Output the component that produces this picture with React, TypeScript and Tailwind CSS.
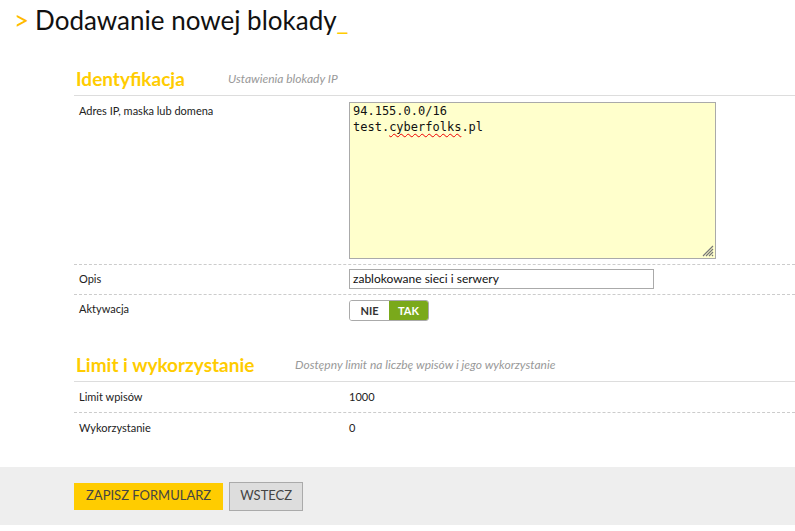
import React from "react";

const font = { fontFamily: "Lato, 'Open Sans', sans-serif" };

const Row = ({
  label,
  children,
  dashed = true,
  className = "",
}: {
  label: string;
  children: React.ReactNode;
  dashed?: boolean;
  className?: string;
}) => (
  <div
    className={`flex ${dashed ? "border-b border-dashed border-[#ccc]" : ""} ${className}`}
  >
    <div className="w-[275px] pl-[5px] text-[11px] leading-[18px] text-[#222]">{label}</div>
    <div className="flex-1 text-[11px] leading-[18px] text-[#222]">{children}</div>
  </div>
);

const SectionHeader = ({ title, sub, subLeft }: { title: string; sub: string; subLeft: string }) => (
  <div className="flex items-end border-b border-[#ddd] pb-[4px] pl-[2px]">
    <h2 className={`text-[19px] font-bold text-[#ffcc00] leading-[24px] ${subLeft}`}>{title}</h2>
    <span className="text-[12px] italic text-[#999] pb-[3px]">{sub}</span>
  </div>
);

export default function App() {
  return (
    <div className="w-[795px] h-[531px] bg-white overflow-hidden" style={font}>
      <h1 className="flex items-baseline pl-[14px] pt-[3px] text-[26px] leading-[34px] text-[#111]">
        <span className="text-[#ffbb00] mr-[6px]">&gt;</span>
        <span>Dodawanie nowej blokady</span>
        <span className="text-[#ffcc00]">_</span>
      </h1>

      <div className="pl-[74px] mt-[30px]">
        <SectionHeader title="Identyfikacja" sub="Ustawienia blokady IP" subLeft="w-[152px]" />

        <Row label="Adres IP, maska lub domena" className="pt-[6px] pb-[5px]">
          <div className="relative w-[367px] h-[157px] bg-[#ffffcc] border border-[#aaa] px-[3px] font-['DejaVu_Sans_Mono',monospace] text-[12px] leading-[16px] text-[#111]">
            <div>94.155.0.0/16</div>
            <div>
              test.
              <span className="underline decoration-wavy decoration-[#e00] decoration-1 underline-offset-2">
                cyberfolks
              </span>
              .pl
            </div>
            <svg className="absolute right-[1px] bottom-[1px]" width="14" height="14" viewBox="0 0 14 14">
              <path d="M13 3 L3 13 M13 6 L6 13 M13 9 L9 13 M13 12 L12 13" stroke="#777" strokeWidth="1.2" />
            </svg>
          </div>
        </Row>

        <Row label="Opis" className="pt-[4px] pb-[5px] items-center">
          <div className="w-[305px] h-[20px] border border-[#aaa] px-[3px] flex items-center text-[12px] text-[#111]">
            zablokowane sieci i serwery
          </div>
        </Row>

        <Row label="Aktywacja" dashed={false} className="pt-[5px] items-start">
          <div className="flex w-[80px] h-[21px] border border-[#aaa] rounded-[3px] overflow-hidden text-[11px] font-bold">
            <div className="w-[39px] flex items-center justify-center text-[#333] bg-white">NIE</div>
            <div className="flex-1 flex items-center justify-center text-white bg-[#7aa91b]">TAK</div>
          </div>
        </Row>

        <div className="mt-[32px]">
          <SectionHeader
            title="Limit i wykorzystanie"
            sub="Dostępny limit na liczbę wpisów i jego wykorzystanie"
            subLeft="w-[219px]"
          />
        </div>

        <Row label="Limit wpisów" className="pt-[6px] pb-[6px]">
          1000
        </Row>
        <Row label="Wykorzystanie" dashed={false} className="pt-[6px] pb-[6px]">
          0
        </Row>
      </div>

      <div className="mt-[24px] bg-[#eeeeee] h-[58px] pl-[74px] flex items-center gap-[6px]">
        <button className="h-[27px] px-[12px] bg-[#ffcc00] text-[#444] text-[13px]">ZAPISZ FORMULARZ</button>
        <button className="h-[29px] px-[10px] bg-[#dddddd] border border-[#aaa] text-[#444] text-[13px]">
          WSTECZ
        </button>
      </div>
    </div>
  );
}
